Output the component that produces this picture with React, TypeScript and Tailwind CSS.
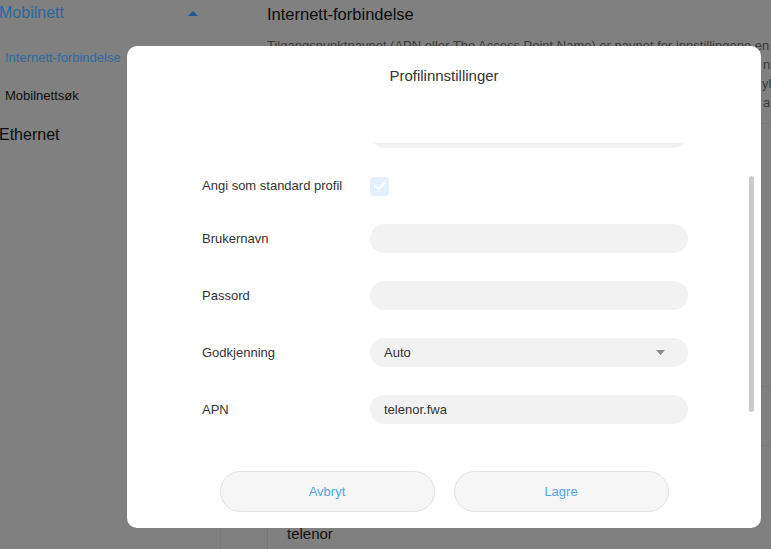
import React from "react";

function Row({ label, children }: { label: string; children: React.ReactNode }) {
  return (
    <div className="flex items-center h-[29px]">
      <div className="w-[168px] shrink-0 text-[13px] text-[#333]">{label}</div>
      {children}
    </div>
  );
}

function Field({ value }: { value?: string }) {
  return (
    <div className="w-[318px] h-[29px] rounded-full bg-[#f2f2f2] px-[14px] flex items-center text-[13px] text-[#333]">
      {value}
    </div>
  );
}

export default function App() {
  return (
    <div className="relative w-[771px] h-[549px] overflow-hidden bg-[#808080] font-['Liberation_Sans',Arial,sans-serif]">
      <div className="flex h-full">
        {/* Sidebar */}
        <aside className="w-[220px] shrink-0 flex flex-col">
          <div className="h-[26px] flex items-center justify-between pr-[22px] -ml-[1px]">
            <span className="text-[16px] text-[#2b68a0]">Mobilnett</span>
            <svg width="10" height="5" viewBox="0 0 10 5">
              <path d="M0 5L5 0L10 5Z" fill="#1a5796" />
            </svg>
          </div>
          <div className="mt-[13px] h-[38px] flex items-center pl-[5px] text-[13px] text-[#2f6ba3]">
            Internett-forbindelse
          </div>
          <div className="h-[38px] flex items-center pl-[5px] text-[13px] text-[#111]">Mobilnettsøk</div>
          <div className="h-[40px] flex items-center -ml-[1px] text-[16px] text-[#0a0a0a]">Ethernet</div>
        </aside>

        {/* Main */}
        <main className="flex-1 flex flex-col min-w-0">
          <div className="pl-[47px] pt-[4px]">
            <div className="h-[20px] leading-[20px] text-[16.5px] text-[#0d0d0d] whitespace-nowrap">
              Internett-forbindelse
            </div>
            <div className="mt-[12px] text-[13px] leading-[19px] text-[#3a3a3a] whitespace-nowrap">
              <div>Tilgangspunktnavnet (APN eller The Access Point Name) er navnet for innstillingene en</div>
              <div className="flex">
                <span className="w-[496px] shrink-0">mobilenheten leser for å sette opp en forbindelse til operatørens</span>
                <span>ntlig</span>
              </div>
              <div className="flex">
                <span className="w-[495px] shrink-0">nettverk. Vanligvis er APN satt automatisk, men du kan legge til</span>
                <span>yll</span>
              </div>
              <div className="flex">
                <span className="w-[496px] shrink-0">en ny profil i samsvar med informasjonen fra operatøren din og</span>
                <span>a</span>
              </div>
            </div>
          </div>
          <div className="ml-[47px] mt-[11px] border-b border-[#767676] h-[1px]" />
          <div className="ml-[47px] h-[263px] border-b border-[#767676]" />
          <div className="ml-[47px] h-[59px] border-b border-[#767676]" />
          <div className="flex-1 flex border-l border-[#7a7a7a]">
            <div className="ml-[46px] flex-1 border-l border-[#777] pl-[19px] pt-[79px] text-[15px] leading-[18px] text-[#111]">
              telenor
            </div>
          </div>
        </main>
      </div>

      {/* Modal */}
      <div className="absolute left-[127px] top-[46px] w-[634px] h-[482px] bg-white rounded-[10px] flex flex-col">
        <div className="h-[97px] shrink-0 pt-[20px] text-center text-[15px] leading-[20px] text-[#333]">
          Profilinnstillinger
        </div>
        <div className="h-[300px] shrink-0 overflow-hidden">
          <div className="-mt-[24px] flex flex-col gap-[28px] pl-[75px]">
            <Row label="Profilnavn">
              <Field value="telenor" />
            </Row>
            <div className="flex items-center h-[20px]">
              <div className="w-[168px] shrink-0 text-[13px] text-[#333]">Angi som standard profil</div>
              <div className="w-[19px] h-[19px] rounded-[4px] bg-[#e4f1fd] flex items-center justify-center">
                <svg width="12" height="10" viewBox="0 0 12 10">
                  <path d="M1.5 5.2L4.6 8.2L10.5 1.8" fill="none" stroke="#fff" strokeWidth="1.8" strokeLinecap="round" strokeLinejoin="round" />
                </svg>
              </div>
            </div>
            <Row label="Brukernavn">
              <Field />
            </Row>
            <Row label="Passord">
              <Field />
            </Row>
            <Row label="Godkjenning">
              <div className="w-[318px] h-[29px] rounded-full bg-[#f2f2f2] pl-[14px] pr-[23px] flex items-center justify-between text-[13px] text-[#333]">
                <span>Auto</span>
                <svg width="9" height="5" viewBox="0 0 9 5">
                  <path d="M0 0H9L4.5 5Z" fill="#8a8a8a" />
                </svg>
              </div>
            </Row>
            <Row label="APN">
              <Field value="telenor.fwa" />
            </Row>
          </div>
        </div>
        <div className="flex justify-center gap-[19px] pt-[28px]">
          <button className="w-[215px] h-[41px] rounded-full border border-[#e2e2e2] bg-[#f6f6f6] text-[13px] text-[#4ea6e8]">
            Avbryt
          </button>
          <button className="w-[215px] h-[41px] rounded-full border border-[#e2e2e2] bg-[#f6f6f6] text-[13px] text-[#4ea6e8]">
            Lagre
          </button>
        </div>
        <div className="absolute left-[622px] top-[130px] w-[5px] h-[236px] rounded-full bg-[#cacaca]" />
      </div>
    </div>
  );
}
